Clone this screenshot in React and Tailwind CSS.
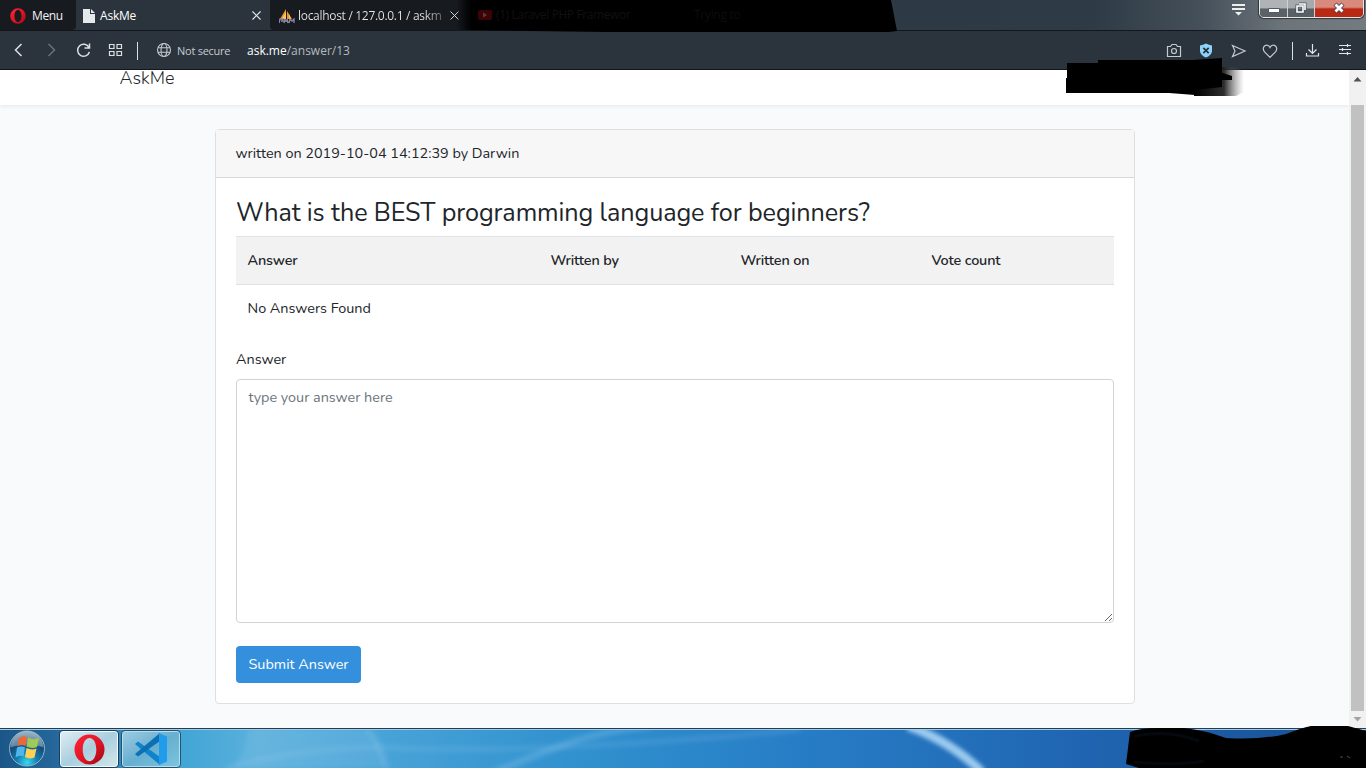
import { X } from 'lucide-react';

const columns = [
  { label: 'Answer', style: 'w-[303px]' },
  { label: 'Written by', style: 'w-[190px]' },
  { label: 'Written on', style: 'w-[191px]' },
  { label: 'Vote count', style: 'w-[194px]' },
];

function OperaLogo({ size }) {
  return (
    <svg width={size} height={size} viewBox="0 0 32 32">
      <defs>
        <linearGradient id="opera" x1="0" y1="0" x2="1" y2="1">
          <stop offset="0" stopColor="#ff2638" />
          <stop offset="0.55" stopColor="#df1424" />
          <stop offset="1" stopColor="#9a0713" />
        </linearGradient>
      </defs>
      <path fill="url(#opera)" fillRule="evenodd" d="M16 0.5a15.5 15.5 0 1 0 0 31a15.5 15.5 0 1 0 0-31zM16 4c4.2 0 7 5.2 7 12s-2.800 12-7 12s-7-5.200-7-12s2.800-12 7-12z" />
    </svg>
  );
}

function TabStrip() {
  return (
    <div className="relative flex h-[30px] bg-[linear-gradient(90deg,#2b3640_0%,#2e3a45_80%,#45505a_88%,#6d757b_94%,#737b80_100%)]">
      <div className="flex h-[30px] w-[76px] items-center rounded-br bg-[#171a1f] pl-[10px] pt-[2px]">
        <OperaLogo size={16} />
        <span className="ml-[6px] text-[12px] leading-none tracking-[-0.4px] text-[#f1f3f4]">Menu</span>
      </div>
      <div className="flex h-[30px] w-[194px] items-center bg-[#2b343d] pl-[7px] pt-px">
        <svg width="12" height="14" viewBox="0 0 12 14" fill="#e6e9ec">
          <path d="M0 0h7v5h5v9H0zM8 0l4 4H8z" />
        </svg>
        <span className="ml-[5px] flex-1 text-[12px] leading-none tracking-[-0.2px] text-white">AskMe</span>
        <X size={15} strokeWidth={1.8} className="mr-[6px] text-[#e3e6e8]" />
      </div>
      <div className="flex h-[30px] w-[200px] items-center rounded-b bg-[#171a1f] pl-[9px] pt-px">
        <svg width="16" height="16" viewBox="0 0 16 16">
          <path d="M1 11L7 1v10zM8 11V3l5 8z" fill="#f39a22" />
          <path d="M3 11l4-7v7zM10 11V6l2 5z" fill="#ffc56b" />
          <path d="M0 15l1-4h3v2H2M5 15l1-4v2h2v-2l1 4M10 15l1-4 2 2 2-2v4" fill="none" stroke="#8b8aac" strokeWidth="1.3" />
        </svg>
        <span className="ml-[3px] w-[148px] whitespace-nowrap bg-gradient-to-r from-[#e6e8ea] from-85% to-[#4b4e52] bg-clip-text text-[12px] leading-[18px] tracking-[-0.3px] text-transparent">localhost / 127.0.0.1 / askm</span>
        <X size={15} strokeWidth={1.6} className="ml-px shrink-0 text-[#d3d6d8]" />
      </div>
      <svg className="absolute left-[456px] top-0" width="441" height="33" viewBox="0 0 441 33">
        <defs>
          <linearGradient id="fade" x1="0" x2="1">
            <stop offset="0" stopColor="#000" stopOpacity="0" />
            <stop offset="0.035" stopColor="#000" />
          </linearGradient>
        </defs>
        <path fill="url(#fade)" d="M0 0h435l6 31-8 1H150L0 30z" />
        <rect x="22" y="10" width="14" height="10" rx="2" fill="#3c0307" />
        <path d="M27 12.500v5l4-2.500z" fill="#5f3a3d" />
      </svg>
      <span className="absolute left-[496px] top-[9px] text-[12px] leading-none tracking-[-0.4px] text-[#101010]">(1) Laravel PHP Framewor</span>
      <span className="absolute left-[694px] top-[9px] text-[12px] leading-none tracking-[-0.3px] text-[#0c0c0c]">Trying to</span>
      <svg className="absolute left-[1231px] top-[3px]" width="15" height="13" viewBox="0 0 15 13" fill="#eef0ef">
        <path d="M1 1h13v2H1zM1 5h13v2H1zM4 9h7l-3.500 3.500z" />
      </svg>
      <WindowButtons />
    </div>
  );
}

function WindowButtons() {
  return (
    <div className="absolute left-[1259px] top-[-2px] flex h-[20px] w-[105px] overflow-hidden rounded-b-[5px] border border-[#e5e5e5] shadow-[0_0_1px_1px_#31383e]">
      <div className="flex w-[28px] items-center justify-center border-r border-[#cfd2d4] bg-gradient-to-b from-[#b0b3b6] from-50% to-[#5a6167] to-55%">
        <svg width="12" height="5" viewBox="0 0 12 5" className="mt-[4px]">
          <path d="M.5.5h11v4H.5z" fill="#fff" stroke="#545a63" />
        </svg>
      </div>
      <div className="flex w-[27px] items-center justify-center border-r border-[#cfd2d4] bg-gradient-to-b from-[#a7aaad] from-50% to-[#596067] to-55%">
        <svg width="12" height="12" viewBox="0 0 12 12">
          <path d="M4 2h6v6M2 4h6v6H2z" fill="none" stroke="#474f5c" strokeWidth="3" />
          <path d="M4 2h6v6M2 4h6v6H2z" fill="none" stroke="#fff" strokeWidth="1.6" />
        </svg>
      </div>
      <div className="flex flex-1 items-center justify-center bg-gradient-to-b from-[#d88b7c] from-45% to-[#b92914] to-55%">
        <svg width="14" height="12" viewBox="0 0 14 12">
          <path d="M3 2l8 8M11 2l-8 8" stroke="#59434a" strokeWidth="4.500" />
          <path d="M3.500 2.500l7 7M10.500 2.500l-7 7" stroke="#fff" strokeWidth="2.800" />
        </svg>
      </div>
    </div>
  );
}

function AddressBar() {
  return (
    <div className="flex h-[40px] items-center border-y border-[#12181d] bg-[#2b343d] text-[#dce0e3]">
      <svg className="ml-[11px]" width="150" height="24" viewBox="11 37 150 24" fill="none" stroke="currentColor" strokeWidth="1.500">
        <path d="M21.500 43L15.500 49l6 6" />
        <path d="M48.500 43l6 6-6 6" stroke="#66717a" />
        <path d="M89 46.500a6 6 0 1 0 .4 4.500M89.500 42.500v4.500h-5" />
        <path d="M109.500 43.500h4.500v4h-4.500zM117 43.500h4.500v4H117zM109.500 50.500h4.500v4h-4.500zM117 50.500h4.500v4H117z" strokeWidth="1.200" />
        <path d="M137.500 41v18" strokeWidth="1" />
      </svg>
      <svg className="-ml-[5px]" width="16" height="16" viewBox="0 0 16 16" fill="none" stroke="#c3c8cd" strokeWidth="1.100">
        <circle cx="8" cy="8" r="6.500" />
        <ellipse cx="8" cy="8" rx="3" ry="6.500" />
        <path d="M2 5.700h12M2 10.300h12" />
      </svg>
      <span className="ml-[5px] w-[70px] whitespace-nowrap text-[11px] leading-none tracking-[-0.25px] text-[#c6cbd0]">Not secure</span>
      <span className="flex-1 pt-px text-[12px] leading-none text-[#b4babf]"><span className="text-white">ask.me</span>/answer/13</span>
      <svg width="200" height="24" viewBox="1166 37 200 24" fill="none" stroke="#c5cacf" strokeWidth="1.200">
        <path d="M1167.500 45.500h3l1.500-2h4l1.500 2h3v10h-13z" />
        <circle cx="1174" cy="50" r="2.500" />
        <path d="M1200 44.500q3-.500 6-2 3 1.500 6 2v6q-1 4-6 6-5-2-6-6z" fill="#8ed4fa" stroke="none" />
        <path d="M1203.300 46.800l5.400 5.400M1208.700 46.800l-5.400 5.400" stroke="#26323c" strokeWidth="1.700" />
        <path d="M1232.500 44.500l12.500 5.500-12.500 5.500 2.500-5.500z" />
        <path d="M1270 56.300l-5.500-5.500c-4-5 3-9.500 5.500-4.300 2.500-5.200 9.500-.700 5.500 4.300z" />
        <path d="M1292.500 41v18" stroke="#dce0e3" strokeWidth="1" />
        <path d="M1312.500 43v9M1308.500 48.500l4 4 4-4M1306.500 52v3h12v-3" stroke="#e2e5e8" />
        <path d="M1339 44.500h12M1339 48.500h12M1339 52.500h12M1347.500 43v3M1342.500 47v3M1347.500 51v3" stroke="#e2e5e8" />
      </svg>
    </div>
  );
}

function AnswerCard() {
  return (
    <div className="ml-[215px] mt-[24px] h-[575px] w-[920px] rounded border border-[#dedfe0] bg-white">
      <div className="h-[48px] border-b border-[#d9d9d9] bg-[#f7f7f7] px-[19.500px] py-[11.500px] leading-[23px]">
        <span>written on 2019-10-04 14:12:39 by Darwin</span>
      </div>
      <div className="p-5">
        <h3 className="mb-2 h-[30px] whitespace-nowrap text-[25.2px] leading-[30px] tracking-[-0.09px]">What is the BEST programming language for beginners?</h3>
        <table className="mb-[15px] w-full table-fixed border-collapse text-left">
          <thead>
            <tr className="h-[48px] border-t border-[#dee2e6] bg-[#f2f2f2]">
              {columns.map(col => (
                <th key={col.label} className={`pl-[11.500px] text-[14.4px] font-semibold tracking-[-0.15px] ${col.style}`}>{col.label}</th>
              ))}
            </tr>
          </thead>
          <tbody>
            <tr className="h-[48px] border-t border-[#dee2e6]">
              <td colSpan="4" className="pl-[11.500px]">No Answers Found</td>
            </tr>
          </tbody>
        </table>
        <label className="mb-2 block leading-[23px]">Answer</label>
        <textarea
          className="block h-[244px] w-full rounded border border-[#ced4da] px-[11.500px] py-[6px] leading-[23px] placeholder:text-[#6c757d]"
          placeholder="type your answer here"
        />
        <button className="mt-[23px] h-[37px] w-[125px] whitespace-nowrap rounded bg-[#3490dc] pt-px text-white">Submit Answer</button>
      </div>
    </div>
  );
}

function Scrollbar() {
  return (
    <div className="flex w-[17px] flex-col items-center bg-[#f1f1f1]">
      <svg width="9" height="35" viewBox="0 0 9 35"><path d="M.5 11.500h8l-4-4.500z" fill="#505050" /></svg>
      <div className="h-[606px] w-[13px] bg-[#c1c1c1]" />
      <svg width="9" height="17" viewBox="0 0 9 17"><path d="M.5 6h8l-4 4.500z" fill="#a3a3a3" /></svg>
    </div>
  );
}

function Taskbar() {
  return (
    <div className="relative flex h-[40px] overflow-hidden border-t border-[#243d57] bg-[linear-gradient(90deg,#1b5688_0%,#25679a_4%,#40a5d5_13%,#5bb0dc_19%,#48a3d7_28%,#3191ce_42%,#277ec6_58%,#2066b3_78%,#184f91_100%)]">
      <svg className="absolute left-0 top-0" width="1366" height="39" viewBox="0 0 1366 39">
        <defs>
          <filter id="soft" x="-20%" y="-20%" width="140%" height="140%"><feGaussianBlur stdDeviation="2" /></filter>
        </defs>
        <g fill="none" stroke="#a8d4f5" filter="url(#soft)">
          <path d="M225 40Q310 15 400 19T620 15T800 0" strokeWidth="6" opacity=".13" />
          <path d="M490 45Q520 32 560 17T650 -3" strokeWidth="7" opacity=".22" />
          <path d="M368 0Q382 18 387 40" strokeWidth="7" opacity=".15" />
          <path d="M908 -3Q950 12 982 43" strokeWidth="9" opacity=".9" />
        </g>
        <path d="M248 0h120q15 18 18 39H232q12-12 16-39z" fill="#b7dcf3" opacity=".12" filter="url(#soft)" />
        <path d="M0 .500h1366" stroke="#a5cae4" />
      </svg>
      <svg className="relative ml-[8px]" width="38" height="39" viewBox="0 0 38 39">
        <defs>
          <radialGradient id="orb" cx=".5" cy=".9" r=".85">
            <stop offset="0" stopColor="#37dcf1" />
            <stop offset=".35" stopColor="#147dae" />
            <stop offset=".7" stopColor="#164976" />
            <stop offset="1" stopColor="#718ea3" />
          </radialGradient>
        </defs>
        <circle cx="19" cy="19.500" r="17.500" fill="url(#orb)" stroke="#8fb6d0" />
        <path d="M3 18a16 16 0 0 1 32 0q-16-5-32 0z" fill="#d2e2e9" opacity=".4" />
        <path d="M11 9q4-3 8-1l-1.500 9q-4-2-8 0z" fill="#ed6838" />
        <path d="M20 8.500q5 3 11 .500l-2 9q-5 2-10.500-.500z" fill="#9ecb56" />
        <path d="M9 18.500q4-2 8 0l-1.500 9q-4-2-8 1z" fill="#4fb6ed" />
        <path d="M18.500 19q5 2.500 10 .500l-2 9q-5 2-9.500-.500z" fill="#ffd052" />
      </svg>
      <div className="relative ml-[13px] mt-px flex h-[38px] w-[60px] items-center justify-center rounded-sm border border-[#183f5e] bg-gradient-to-br from-[#e2eef4] via-[#a9cfdf] to-[#d4e7e9] shadow-[inset_0_0_0_1px_#f3fafd]">
        <OperaLogo size={31} />
      </div>
      <div className="relative ml-[2px] mt-px flex h-[38px] w-[60px] items-center justify-center rounded-sm border border-[#24536f] bg-gradient-to-br from-[#a0cce1] via-[#66afd1] to-[#7bc6df] shadow-[inset_0_0_0_1px_#b7deee]">
        <svg width="32" height="32" viewBox="0 0 32 32">
          <path d="M0 11l3-2.500 22 15.500v8z" fill="#0f83cc" />
          <path d="M0 21l3 2.500L25 8V0z" fill="#0b70b4" />
          <path d="M24 0l8 3.500v25L24 32z" fill="#219cea" />
        </svg>
      </div>
    </div>
  );
}

export default function App() {
  return (
    <div className="relative h-[768px] w-[1366px] overflow-hidden font-['Open_Sans',sans-serif]">
      <TabStrip />
      <AddressBar />
      <div className="flex h-[658px] bg-[#f8fafc] font-['Nunito','Open_Sans',sans-serif] text-[14.4px] text-[#212529]">
        <main className="flex-1">
          <nav className="h-[35px] bg-white pl-[119.500px] shadow-[0_2px_4px_rgba(0,0,0,0.06)]">
            <span className="relative top-[-6px] text-[18px] font-light leading-[28px]">AskMe</span>
          </nav>
          <AnswerCard />
        </main>
        <Scrollbar />
      </div>
      <Taskbar />
      <svg className="absolute left-[1066px] top-[58px]" width="182" height="39" viewBox="0 0 182 39">
        <defs>
          <linearGradient id="smear" x1="0" x2="1">
            <stop offset="0" stopColor="#000" />
            <stop offset=".6" stopColor="#222" stopOpacity=".95" />
            <stop offset="1" stopColor="#777" stopOpacity="0" />
          </linearGradient>
        </defs>
        <path d="M128 9h36l14 3v22l-8 4h-42z" fill="url(#smear)" />
        <path d="M1 5h31V2h95l29-2v29l-27 3v5l-26-2H0V20h1z" fill="#000" />
        <path d="M150 13l16 5v4h-16z" fill="#000" />
      </svg>
      <svg className="absolute left-[1124px] top-[725px]" width="242" height="43" viewBox="0 0 242 43">
        <path d="M6 7q10-4 28-4h26q20 2 42 10 35 2 60-4 15-6 25-8h37l18 5v37H15L2 39z" fill="#000" />
        <path d="M10 11q35-7 65 5M10 37q40 4 70-1" fill="none" stroke="#03090f" strokeWidth="3" />
        <path d="M216 32h3M223 31l3 2" stroke="#375372" />
      </svg>
    </div>
  );
}
